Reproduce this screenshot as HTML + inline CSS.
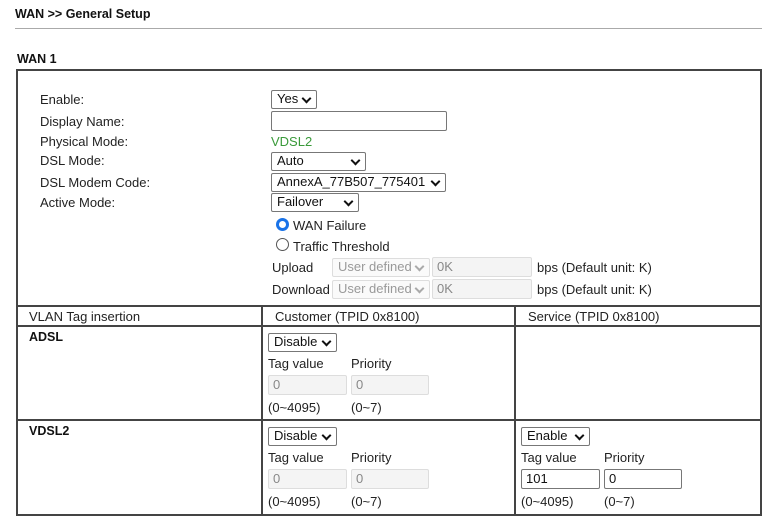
<!DOCTYPE html>
<html><head><meta charset="utf-8"><style>
body{margin:0;width:767px;height:520px;background:#fff;position:relative;font-family:"Liberation Sans",Arial,sans-serif;font-size:13px;color:#222;overflow:hidden}
.a{position:absolute;white-space:nowrap;line-height:15px}
.b{font-weight:bold;font-size:12.5px;color:#111}
.ln{position:absolute;background:#444}
.sel{position:absolute;border:1px solid #777;border-radius:2px;background:#fff;box-sizing:border-box;height:19px;line-height:16px;padding-left:5px;font-size:13px;color:#111}
.sel:after{content:"";position:absolute;right:6px;top:4px;width:5px;height:5px;border-right:2px solid #111;border-bottom:2px solid #111;transform:rotate(45deg)}
.sel.d{border-color:#ddd;color:#999;background:#fafafa}
.sel.d:after{border-color:#aaa}
.in{position:absolute;border:1px solid #777;box-sizing:border-box;height:20px;line-height:18px;padding-left:4px;background:#fff;color:#111;border-radius:2px}
.in.d{border-color:#ddd;background:#f4f4f4;color:#888}
.rad{position:absolute;width:13px;height:13px;border-radius:50%;box-sizing:border-box;border:1px solid #555}
</style></head><body>
<div class="a b" style="left:15px;top:7px">WAN &gt;&gt; General Setup</div>
<div class="ln" style="left:15px;top:28px;width:747px;height:1px;background:#aaa"></div>
<div class="a b" style="left:17px;top:52px">WAN 1</div>
<div style="position:absolute;left:16px;top:69px;width:746px;height:447px;border:2px solid #444;box-sizing:border-box"></div>
<div class="ln" style="left:16px;top:305px;width:746px;height:2px"></div>
<div class="ln" style="left:16px;top:325px;width:746px;height:2px"></div>
<div class="ln" style="left:16px;top:419px;width:746px;height:2px"></div>
<div class="ln" style="left:261px;top:305px;width:2px;height:211px"></div>
<div class="ln" style="left:514px;top:305px;width:2px;height:211px"></div>

<div class="a" style="left:40px;top:92px">Enable:</div>
<div class="a" style="left:40px;top:114px">Display Name:</div>
<div class="a" style="left:40px;top:134px">Physical Mode:</div>
<div class="a" style="left:40px;top:153px">DSL Mode:</div>
<div class="a" style="left:40px;top:175px">DSL Modem Code:</div>
<div class="a" style="left:40px;top:195px">Active Mode:</div>

<div class="sel" style="left:271px;top:90px;width:46px">Yes</div>
<div class="in" style="left:271px;top:111px;width:176px"></div>
<div class="a" style="left:271px;top:134px;color:#3a9a3a">VDSL2</div>
<div class="sel" style="left:271px;top:152px;width:95px">Auto</div>
<div class="sel" style="left:271px;top:173px;width:175px">AnnexA_77B507_775401</div>
<div class="sel" style="left:271px;top:193px;width:88px">Failover</div>

<div class="rad" style="left:276px;top:218px;border:3.5px solid #1a73e8"></div>
<div class="a" style="left:293px;top:218px">WAN Failure</div>
<div class="rad" style="left:276px;top:238px"></div>
<div class="a" style="left:293px;top:239px">Traffic Threshold</div>

<div class="a" style="left:272px;top:260px">Upload</div>
<div class="sel d" style="left:332px;top:258px;width:98px">User defined</div>
<div class="in d" style="left:432px;top:257px;width:100px">0K</div>
<div class="a" style="left:537px;top:260px">bps (Default unit: K)</div>
<div class="a" style="left:272px;top:282px">Download</div>
<div class="sel d" style="left:332px;top:280px;width:98px">User defined</div>
<div class="in d" style="left:432px;top:279px;width:100px">0K</div>
<div class="a" style="left:537px;top:282px">bps (Default unit: K)</div>

<div class="a" style="left:29px;top:309px">VLAN Tag insertion</div>
<div class="a" style="left:275px;top:309px">Customer (TPID 0x8100)</div>
<div class="a" style="left:528px;top:309px">Service (TPID 0x8100)</div>

<div class="a b" style="left:29px;top:330px">ADSL</div>
<div class="sel" style="left:268px;top:333px;width:69px">Disable</div>
<div class="a" style="left:268px;top:356px">Tag value</div>
<div class="a" style="left:351px;top:356px">Priority</div>
<div class="in d" style="left:268px;top:375px;width:79px">0</div>
<div class="in d" style="left:351px;top:375px;width:78px">0</div>
<div class="a" style="left:268px;top:400px">(0~4095)</div>
<div class="a" style="left:351px;top:400px">(0~7)</div>

<div class="a b" style="left:29px;top:424px">VDSL2</div>
<div class="sel" style="left:268px;top:427px;width:69px">Disable</div>
<div class="a" style="left:268px;top:450px">Tag value</div>
<div class="a" style="left:351px;top:450px">Priority</div>
<div class="in d" style="left:268px;top:469px;width:79px">0</div>
<div class="in d" style="left:351px;top:469px;width:78px">0</div>
<div class="a" style="left:268px;top:494px">(0~4095)</div>
<div class="a" style="left:351px;top:494px">(0~7)</div>

<div class="sel" style="left:521px;top:427px;width:69px">Enable</div>
<div class="a" style="left:521px;top:450px">Tag value</div>
<div class="a" style="left:604px;top:450px">Priority</div>
<div class="in" style="left:521px;top:469px;width:79px">101</div>
<div class="in" style="left:604px;top:469px;width:78px">0</div>
<div class="a" style="left:521px;top:494px">(0~4095)</div>
<div class="a" style="left:604px;top:494px">(0~7)</div>
</body></html>
